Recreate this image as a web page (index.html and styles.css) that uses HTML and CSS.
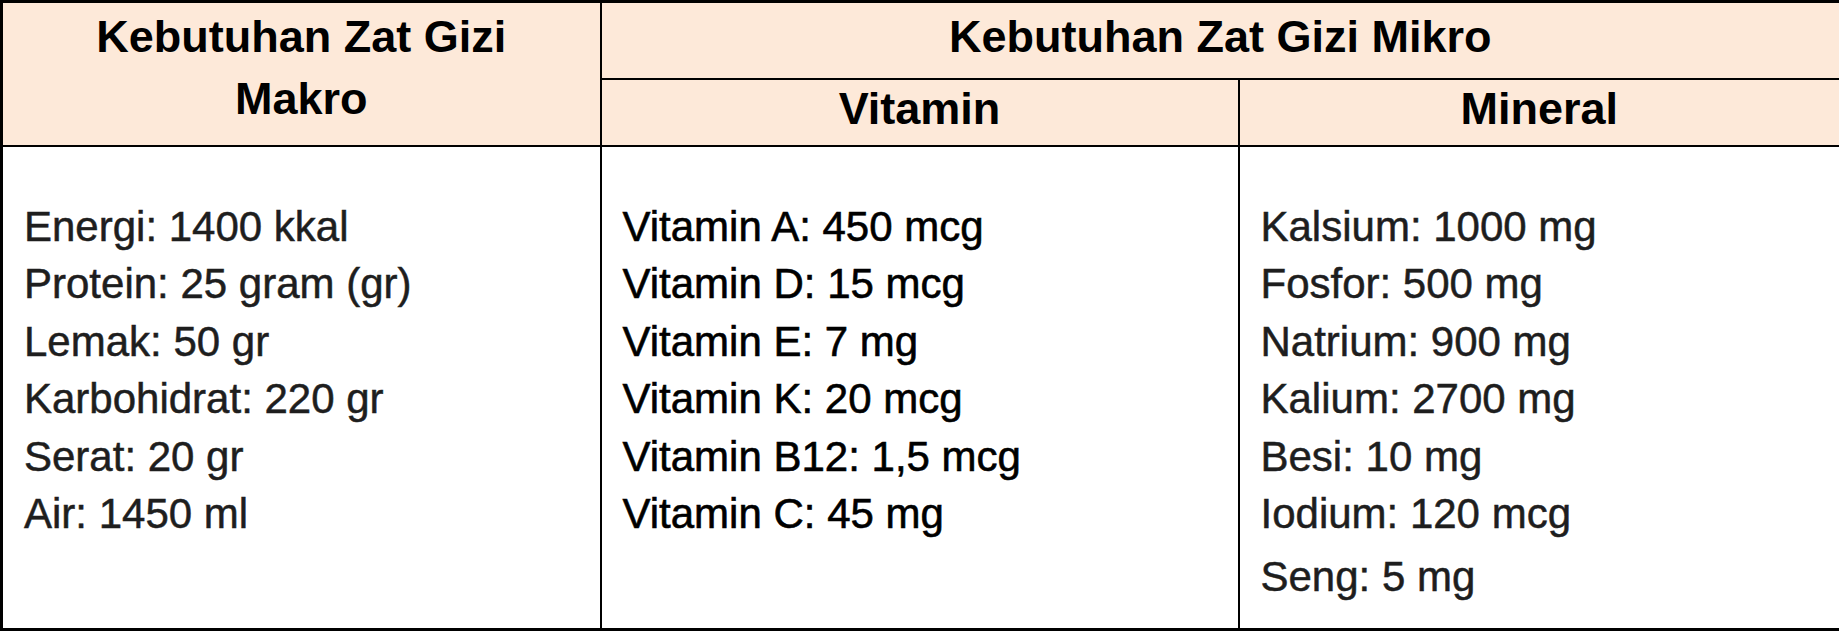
FILE: index.html
```html
<!DOCTYPE html>
<html lang="id">
<head>
<meta charset="utf-8">
<title>Kebutuhan Zat Gizi</title>
<link rel="stylesheet" href="styles.css">
</head>
<body>
<table class="gizi">
  <colgroup>
    <col class="c1">
    <col class="c2">
    <col class="c3">
  </colgroup>
  <thead>
    <tr class="h1">
      <th rowspan="2" class="makro-head"><span class="two-line">Kebutuhan Zat Gizi<br>Makro</span></th>
      <th colspan="2" class="mikro-head">Kebutuhan Zat Gizi Mikro</th>
    </tr>
    <tr class="h2">
      <th>Vitamin</th>
      <th>Mineral</th>
    </tr>
  </thead>
  <tbody>
    <tr class="body-row">
      <td class="list makro">
        <div>Energi: 1400 kkal</div>
        <div>Protein: 25 gram (gr)</div>
        <div>Lemak: 50 gr</div>
        <div>Karbohidrat: 220 gr</div>
        <div>Serat: 20 gr</div>
        <div>Air: 1450 ml</div>
      </td>
      <td class="list vitamin">
        <div>Vitamin A: 450 mcg</div>
        <div>Vitamin D: 15 mcg</div>
        <div>Vitamin E: 7 mg</div>
        <div>Vitamin K: 20 mcg</div>
        <div>Vitamin B12: 1,5 mcg</div>
        <div>Vitamin C: 45 mg</div>
      </td>
      <td class="list mineral">
        <div>Kalsium: 1000 mg</div>
        <div>Fosfor: 500 mg</div>
        <div>Natrium: 900 mg</div>
        <div>Kalium: 2700 mg</div>
        <div>Besi: 10 mg</div>
        <div>Iodium: 120 mcg</div>
        <div class="last">Seng: 5 mg</div>
      </td>
    </tr>
  </tbody>
</table>
</body>
</html>
```
FILE: styles.css
```css
html, body {
  margin: 0;
  padding: 0;
  background: #ffffff;
}

.gizi {
  width: 1839px;
  height: 631px;
  border-collapse: collapse;
  table-layout: fixed;
  font-family: "Liberation Sans", Arial, sans-serif;
  border: 3px solid #000;
}

.c1 { width: 599px; }
.c2 { width: 638px; }
.c3 { width: 602px; }

.gizi th,
.gizi td {
  border: 2px solid #000;
  padding: 0;
}

.gizi th {
  background: #fde9d9;
  font-weight: bold;
  font-size: 45px;
  color: #000;
  text-align: center;
  vertical-align: middle;
}

.gizi .h1 { height: 77px; }
.gizi .h2 { height: 67px; }

.gizi .mikro-head {
  padding-bottom: 6px;
}

.gizi .h2 th {
  padding-bottom: 6px;
}

.two-line {
  display: block;
  line-height: 62px;
  padding-bottom: 12px;
}

.gizi .list {
  vertical-align: top;
  font-size: 42px;
  line-height: 57.5px;
  padding-top: 51px;
  padding-left: 21px;
  color: #1e1e1e;
  -webkit-text-stroke: 0.5px #1e1e1e;
}

.gizi .list.vitamin {
  color: #000;
  -webkit-text-stroke: 0.6px #000;
}

.list .last {
  margin-top: 5px;
}
```
